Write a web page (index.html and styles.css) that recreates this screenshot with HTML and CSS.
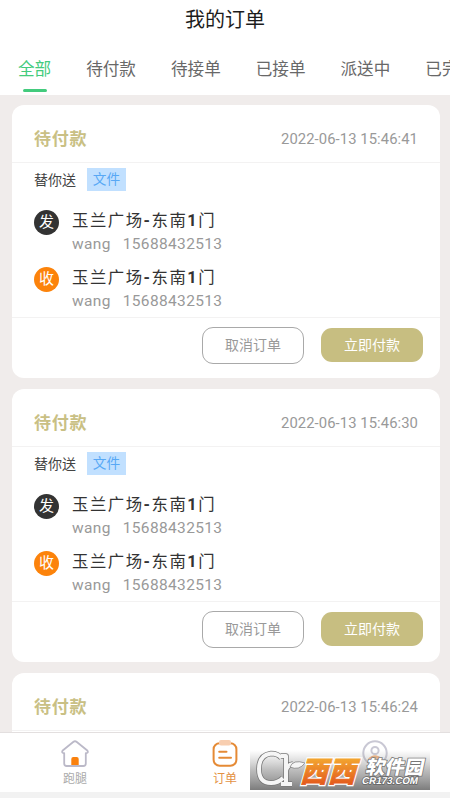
FILE: index.html
```html
<!DOCTYPE html>
<html lang="zh-CN">
<head>
<meta charset="utf-8">
<title>我的订单</title>
<link rel="stylesheet" href="styles.css">
</head>
<body>
<div class="app">
  <header class="title">我的订单</header>
  <nav class="tabs">
    <span class="tab active">全部</span><span class="tab">待付款</span><span class="tab">待接单</span><span class="tab">已接单</span><span class="tab">派送中</span><span class="tab">已完成</span>
  </nav>
  <main class="list">
    <article class="card">
      <div class="head"><b class="status">待付款</b><time class="time">2022-06-13 15:46:41</time></div>
      <div class="kind"><span class="kind-name">替你送</span><span class="tag">文件</span></div>
      <div class="stop"><i class="dot">发</i><div><p class="place">玉兰广场<b>-</b>东南<b>1</b>门</p><p class="who"><span>wang</span><span>15688432513</span></p></div></div>
      <div class="stop"><i class="dot orange">收</i><div><p class="place">玉兰广场<b>-</b>东南<b>1</b>门</p><p class="who"><span>wang</span><span>15688432513</span></p></div></div>
      <div class="actions"><button class="btn cancel">取消订单</button><button class="btn pay">立即付款</button></div>
    </article>
    <article class="card">
      <div class="head"><b class="status">待付款</b><time class="time">2022-06-13 15:46:30</time></div>
      <div class="kind"><span class="kind-name">替你送</span><span class="tag">文件</span></div>
      <div class="stop"><i class="dot">发</i><div><p class="place">玉兰广场<b>-</b>东南<b>1</b>门</p><p class="who"><span>wang</span><span>15688432513</span></p></div></div>
      <div class="stop"><i class="dot orange">收</i><div><p class="place">玉兰广场<b>-</b>东南<b>1</b>门</p><p class="who"><span>wang</span><span>15688432513</span></p></div></div>
      <div class="actions"><button class="btn cancel">取消订单</button><button class="btn pay">立即付款</button></div>
    </article>
    <article class="card">
      <div class="head"><b class="status">待付款</b><time class="time">2022-06-13 15:46:24</time></div>
    </article>
  </main>
  <footer class="bar">
    <div class="item">
      <svg class="icon" viewBox="0 0 30 28" fill="none"><path d="M13.5 1.8Q15 .7 16.5 1.8L27 10.2Q29 12.5 26.5 13.2H25.8V23.5Q25.8 26 23.3 26H6.7Q4.2 26 4.2 23.5V13.2H3.5Q1 12.5 3 10.2Z" stroke="#bbb9c8" stroke-width="1.8" stroke-linejoin="round"/><path d="M11.3 25V19Q11.3 17 13.3 17H16.7Q18.7 17 18.7 19V25Z" fill="#fa810d"/></svg>
      <span>跑腿</span>
    </div>
    <div class="item on">
      <svg class="icon" viewBox="0 0 30 28" fill="none"><rect x="3.6" y="3.2" width="22.8" height="22.6" rx="6" stroke="#e58a35" stroke-width="2"/><rect x="9" y="0" width="12" height="5.6" rx="2" fill="#f8ceb0"/><path d="M9.2 11.8H16.5M9.2 17.8H21" stroke="#e58a35" stroke-width="2" stroke-linecap="round"/></svg>
      <span>订单</span>
    </div>
    <div class="item">
      <svg class="icon" viewBox="0 0 30 28" fill="none"><circle cx="15" cy="13" r="11.7" stroke="#c9c8d4" stroke-width="2"/><circle cx="15" cy="10.5" r="3.6" stroke="#c9c8d4" stroke-width="2"/><path d="M9 20Q15 13.5 21 20" stroke="#f3b17c" stroke-width="3"/></svg>
    </div>
  </footer>
  <div class="base"></div>
  <svg class="mark" viewBox="0 0 180 40">
    <defs>
      <linearGradient id="shade" x2="0" y2="1"><stop stop-color="#aaa" stop-opacity="0"/><stop offset=".5" stop-color="#999" stop-opacity=".65"/><stop offset="1" stop-color="#7c7c7c"/></linearGradient>
      <linearGradient id="fire" x2="0" y2="1"><stop offset=".15" stop-color="#f5b233"/><stop offset="1" stop-color="#e04a18"/></linearGradient>
    </defs>
    <rect width="180" height="40" fill="url(#shade)"/>
    <g fill="none" stroke-linejoin="round">
      <path class="edge" d="M31.500 8Q28 3.500 21 3.500Q9 5 9 19Q9 33 21 33Q28 33 33 28M31 6H36V34M31 34H42M36 21Q37 15 43 14"/>
      <path class="ink" d="M31.500 8Q28 3.500 21 3.500Q9 5 9 19Q9 33 21 33Q28 33 33 28M31 6H36V34M31 34H42M36 21Q37 15 43 14"/>
    </g>
    <path d="M40 17Q43 9 55 13Q49 21 40 17Z" fill="#f5f5f5" stroke="#777" stroke-width=".7"/>
    <g class="mark-text">
      <g transform="translate(50 31.500) skewX(-16) scale(1 1.060)"><text class="west west-edge">西</text><text class="west">西</text></g>
      <g transform="translate(78 31.500) skewX(-16) scale(1 1.060)"><text class="west west-edge">西</text><text class="west">西</text></g>
      <g transform="translate(115 23.500) skewX(-12)"><text class="soft" textLength="58" lengthAdjust="spacingAndGlyphs">软件园</text></g>
      <g transform="translate(111.500 34.300) skewX(-12)"><text class="site" textLength="56" lengthAdjust="spacingAndGlyphs">CR173.COM</text></g>
    </g>
  </svg>
</div>
</body>
</html>
```
FILE: styles.css
```css
* { box-sizing: border-box; }
body { margin: 0; font-family: Roboto, "Noto Sans CJK SC", sans-serif; background: #fff; }
p { margin: 0; }
.app { position: relative; width: 450px; height: 800px; overflow: hidden; display: flex; flex-direction: column; background: #f0eceb; }
.title { flex: none; height: 40px; line-height: 40px; text-align: center; font-size: 20px; color: #1c1c1c; background: #fff; }
.tabs { flex: none; height: 55px; padding-left: 18px; display: flex; gap: 35px; background: #fff; font-size: 16.6px; color: #686868; white-space: nowrap; overflow: hidden; }
.tab { flex: none; line-height: 59px; height: 55px; }
.active { color: #43cb7d; display: flex; flex-direction: column; align-items: center; }
.active::after { content: ""; flex: none; width: 24px; height: 3px; margin-top: -10px; border-radius: 2px; background: #43cb7d; }
.list { flex: 1; min-height: 0; overflow: hidden; padding: 10px 10px 0 12px; display: flex; flex-direction: column; gap: 11px; }
.card { flex: none; height: 273px; border-radius: 12px; background: #fff; display: flex; flex-direction: column; }
.head { flex: none; height: 58px; padding: 10px 22px 0 22px; display: flex; align-items: center; justify-content: space-between; border-bottom: 1px solid #f3f2f2; }
.status { font-size: 17px; letter-spacing: .7px; margin-top: -3px; color: #c9c084; }
.time { font-size: 14.8px; letter-spacing: .08px; color: #999; }
.kind { flex: none; height: 35px; padding: 0 0 2px 22px; display: flex; align-items: center; gap: 11px; font-size: 14px; color: #444; }
.kind-name { margin-top: -2px; }
.tag { width: 39px; height: 23px; line-height: 22px; text-align: center; background: #c1e0ff; color: #58a8f5; font-size: 13.7px; }
.stop { flex: none; height: 57px; padding: 10px 0 0 22px; display: flex; gap: 13px; }
.dot { width: 25px; height: 25px; margin-top: 2px; border-radius: 50%; line-height: 24px; text-align: center; font-size: 15px; font-style: normal; color: #fff; background: #333; }
.orange { background: #fc830b; }
.place { height: 24px; line-height: 26px; font-size: 16.4px; letter-spacing: 1.5px; color: #333; }
.who { height: 24px; line-height: 25px; font-size: 15.5px; letter-spacing: .35px; color: #999; display: flex; gap: 12px; }
.actions { flex: none; height: 60px; margin-top: 5px; padding: 0 17px 5px 0; display: flex; align-items: center; justify-content: flex-end; gap: 17px; border-top: 1px solid #f3f2f2; }
.btn { width: 102px; height: 34px; padding: 0 0 2px; border: 0; border-radius: 11px; font: 14px Roboto, "Noto Sans CJK SC", sans-serif; }
.cancel { height: 37px; border: 1.5px solid #a9a9a9; background: #fff; color: #999; }
.pay { background: #c7be81; color: #fff; }
.bar { flex: none; height: 60px; border-top: 1px solid #e3dfdf; background: #fff; display: flex; }
.item { flex: 1; padding-top: 7px; display: flex; flex-direction: column; align-items: center; font-size: 12px; line-height: 18px; color: #aaa; }
.icon { width: 30px; height: 28px; margin-bottom: 2px; }
.on { color: #e39143; }
.base { flex: none; height: 8px; background: #f2f2f2; border-bottom: 2px solid #fff; }
.mark { position: absolute; left: 250px; top: 750px; width: 180px; height: 40px; }
.edge { stroke: #777; stroke-width: 5.5px; }
.ink { stroke: #f5f5f5; stroke-width: 4px; }
.mark-text { font-family: "Noto Sans CJK SC", sans-serif; font-weight: 900; fill: #fff; }
.west { font-size: 27px; fill: url(#fire); stroke: url(#fire); stroke-width: .8px; }
.west-edge { stroke: #fff; stroke-width: 3px; }
.soft { font-size: 19px; stroke: #777; stroke-width: 1.6px; paint-order: stroke; }
.site { font-family: "Liberation Sans", sans-serif; font-size: 10px; stroke: #666; stroke-width: 1.5px; paint-order: stroke; }
```
